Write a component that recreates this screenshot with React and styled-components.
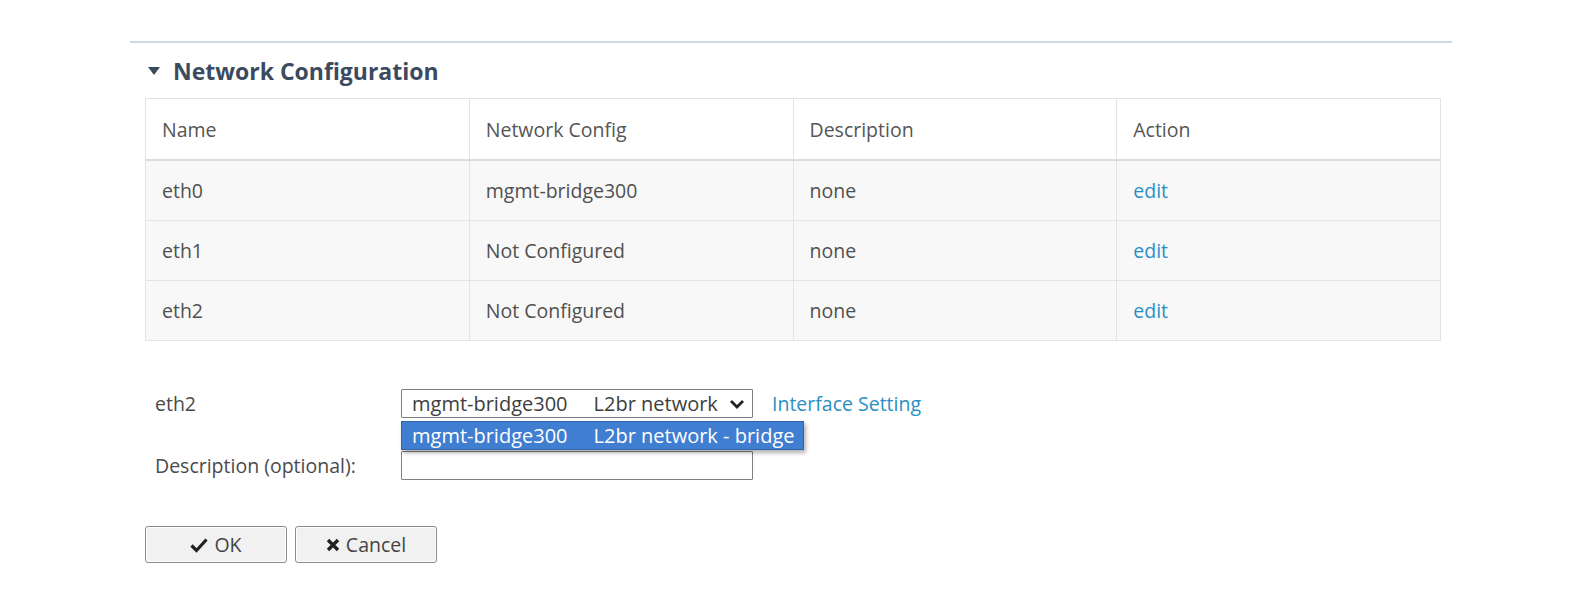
import React from "react";
import styled, { createGlobalStyle } from "styled-components";

const Global = createGlobalStyle`
  html, body { margin: 0; padding: 0; background: #ffffff; }
  body { font-family: "Open Sans", "Noto Sans", sans-serif; color: #4a4a4a; }
`;

const Page = styled.div`
  width: 1588px;
  height: 610px;
  box-sizing: border-box;
  padding: 41px 136px 0 130px;
`;

const Section = styled.section`
  border-top: 2px solid #c9dbe3;
`;

const TitleRow = styled.div`
  display: flex;
  align-items: center;
  gap: 13px;
  height: 55px;
  padding-left: 18px;
  font-size: 23px;
  font-weight: 700;
  color: #3b4a5f;
`;

const Caret = styled.span`
  width: 0;
  height: 0;
  border-left: 6px solid transparent;
  border-right: 6px solid transparent;
  border-top: 8px solid #3b4a5f;
  margin-top: 1px;
`;

const Table = styled.table`
  margin-left: 15px;
  width: 1296px;
  border-collapse: collapse;
  font-size: 19.5px;
  color: #505050;
  table-layout: fixed;
`;

const Th = styled.th`
  text-align: left;
  font-weight: 400;
  height: 60px;
  padding: 0 16px;
  background: #ffffff;
  border: 1px solid #e3e3e3;
  border-bottom: 2px solid #dcdcdc;
  color: #555;
`;

const Td = styled.td`
  height: 59px;
  padding: 0 16px;
  background: #f8f8f8;
  border: 1px solid #e3e3e3;
`;

const Link = styled.a`
  color: #2b8fc4;
  text-decoration: none;
  cursor: pointer;
`;

const Form = styled.div`
  margin-top: 48px;
  margin-left: 25px;
  display: grid;
  grid-template-columns: 246px auto;
  row-gap: 33px;
  align-items: center;
  font-size: 19.5px;
  color: #4a4a4a;
`;

const Label = styled.div`
  line-height: 29px;
`;

const Field = styled.div`
  display: flex;
  align-items: center;
  gap: 19px;
  position: relative;
`;

const SelectBox = styled.div`
  box-sizing: border-box;
  width: 352px;
  height: 29px;
  border: 1px solid #7f7f7f;
  border-radius: 1px;
  padding: 0 7px 0 10px;
  display: flex;
  align-items: center;
  justify-content: space-between;
  background: #fff;
  color: #3e3e3e;
  white-space: nowrap;
  overflow: hidden;
  font-size: 20px;
`;

const OptText = styled.span`
  display: inline-block;
  &:first-child { margin-right: 26px; }
`;

const Dropdown = styled.div`
  position: absolute;
  left: 0;
  top: 32px;
  box-sizing: border-box;
  width: 403px;
  height: 29px;
  background: #3f7ed0;
  border: 1px solid #2f64a8;
  box-shadow: 2px 3px 4px rgba(0, 0, 0, 0.3);
  color: #ffffff;
  display: flex;
  align-items: center;
  padding-left: 10px;
  white-space: nowrap;
  z-index: 2;
  font-size: 20px;
`;

const Input = styled.input`
  box-sizing: border-box;
  width: 352px;
  height: 29px;
  border: 1px solid #808080;
  border-radius: 1px;
  background: #fff;
  outline: none;
`;

const Buttons = styled.div`
  margin-top: 46px;
  margin-left: 15px;
  display: flex;
  gap: 8px;
`;

const Button = styled.button`
  box-sizing: border-box;
  width: 142px;
  height: 37px;
  border: 1px solid #8c8c8c;
  border-radius: 3px;
  box-shadow: inset 0 0 0 1px #ffffff;
  background: #f1f1f1;
  font-family: "Open Sans", "Noto Sans", sans-serif;
  font-size: 19.5px;
  color: #444;
  display: flex;
  align-items: center;
  justify-content: center;
  gap: 6px;
  cursor: pointer;
`;

const rows = [
  ["eth0", "mgmt-bridge300", "none"],
  ["eth1", "Not Configured", "none"],
  ["eth2", "Not Configured", "none"],
];

export default function App() {
  return (
    <Page>
      <Global />
      <Section>
        <TitleRow>
          <Caret />
          <span>Network Configuration</span>
        </TitleRow>
        <Table>
          <thead>
            <tr>
              <Th>Name</Th>
              <Th>Network Config</Th>
              <Th>Description</Th>
              <Th>Action</Th>
            </tr>
          </thead>
          <tbody>
            {rows.map((r) => (
              <tr key={r[0]}>
                <Td>{r[0]}</Td>
                <Td>{r[1]}</Td>
                <Td>{r[2]}</Td>
                <Td>
                  <Link>edit</Link>
                </Td>
              </tr>
            ))}
          </tbody>
        </Table>
        <Form>
          <Label>eth2</Label>
          <Field>
            <SelectBox>
              <span>
                <OptText>mgmt-bridge300</OptText>
                <OptText>L2br network</OptText>
              </span>
              <svg width="16" height="12" viewBox="0 0 16 12">
                <path d="M2 3 L8 9 L14 3" fill="none" stroke="#222" strokeWidth="2.8" />
              </svg>
            </SelectBox>
            <Link>Interface Setting</Link>
            <Dropdown>
              <OptText>mgmt-bridge300</OptText>
              <OptText>L2br network - bridge</OptText>
            </Dropdown>
          </Field>
          <Label>Description (optional):</Label>
          <Field>
            <Input />
          </Field>
        </Form>
        <Buttons>
          <Button>
            <svg width="18" height="16" viewBox="0 0 18 16">
              <path d="M1.5 8.5 L6.5 13.5 L16.5 2.5" fill="none" stroke="#222" strokeWidth="3.2" />
            </svg>
            OK
          </Button>
          <Button>
            <svg width="14" height="14" viewBox="0 0 14 14">
              <path d="M2 2 L12 12 M12 2 L2 12" fill="none" stroke="#222" strokeWidth="3.4" />
            </svg>
            Cancel
          </Button>
        </Buttons>
      </Section>
    </Page>
  );
}
